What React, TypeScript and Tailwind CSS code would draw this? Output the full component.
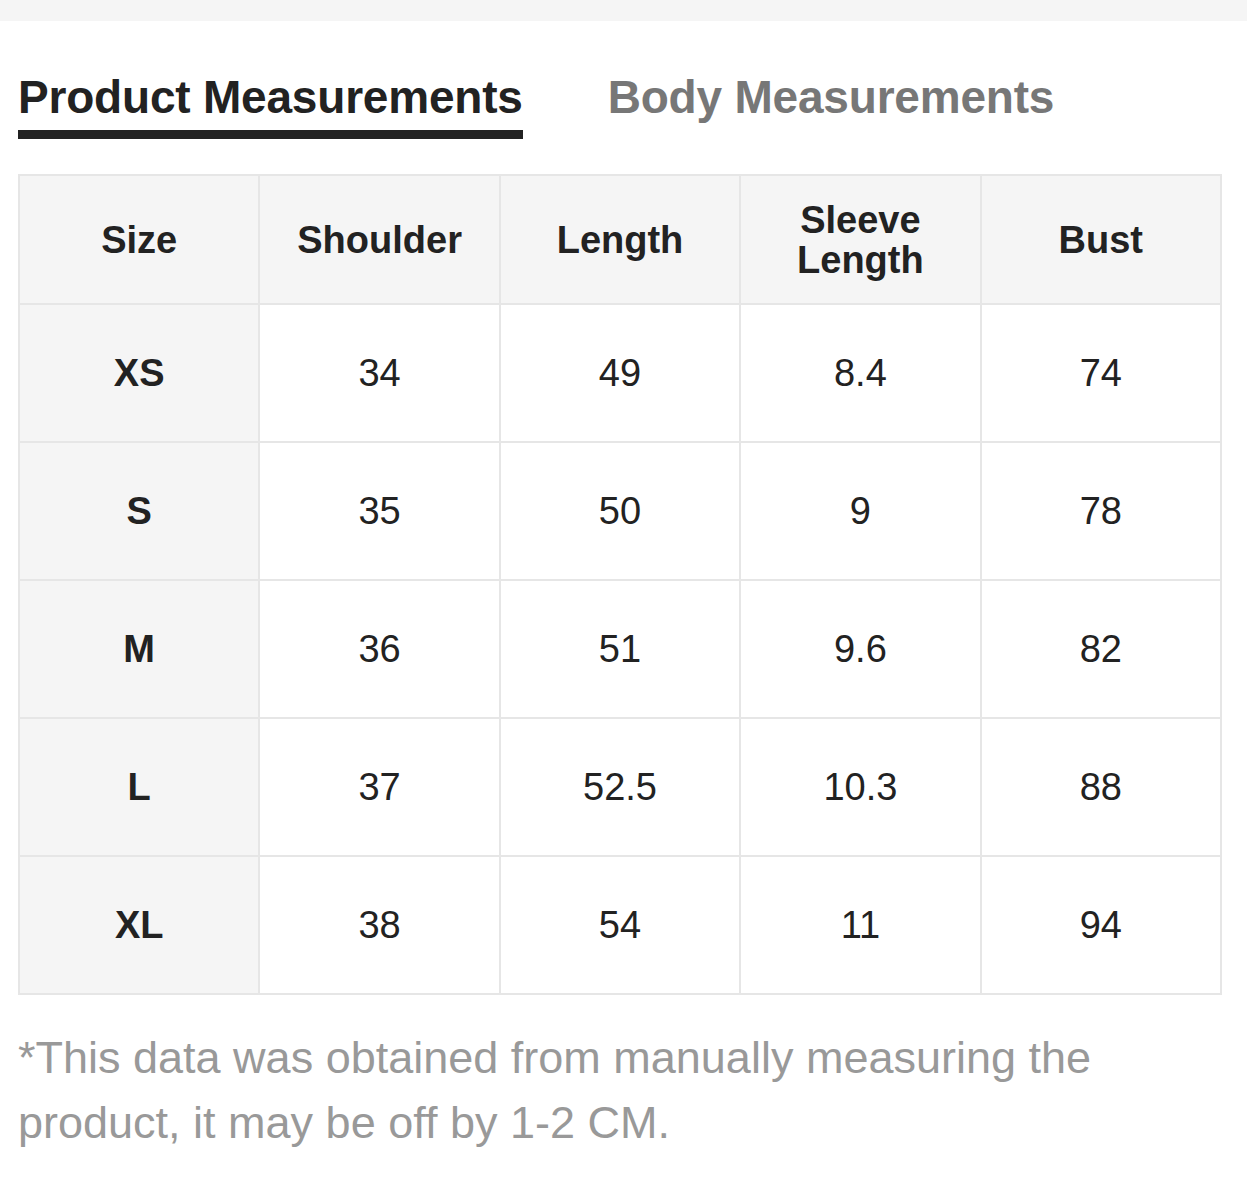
import * as React from "react";

const headers = ["Size", "Shoulder", "Length", "Sleeve Length", "Bust"];

const rows = [
  ["XS", "34", "49", "8.4", "74"],
  ["S", "35", "50", "9", "78"],
  ["M", "36", "51", "9.6", "82"],
  ["L", "37", "52.5", "10.3", "88"],
  ["XL", "38", "54", "11", "94"],
];

export default function App() {
  const [tab, setTab] = React.useState("product");

  return (
    <div
      className="min-h-screen bg-white text-[#222]"
      style={{ fontFamily: '"Liberation Sans", Arial, sans-serif' }}
    >
      {/* top strip */}
      <div className="h-[21px] bg-[#f5f5f5]" />

      <div className="px-[18px] pt-[53px]">
        {/* tabs */}
        <div className="flex items-start gap-[85px]">
          <button onClick={() => setTab("product")} className="flex flex-col items-stretch">
            <span
              className={`text-[46px] font-bold leading-none tracking-[-0.2px] ${
                tab === "product" ? "text-[#222]" : "text-[#777]"
              }`}
            >
              Product Measurements
            </span>
            <span
              className={`mt-[10px] h-[9px] ${tab === "product" ? "bg-[#222]" : "bg-transparent"}`}
            />
          </button>
          <button onClick={() => setTab("body")} className="flex flex-col items-stretch">
            <span
              className={`text-[46px] font-bold leading-none tracking-[-0.2px] ${
                tab === "body" ? "text-[#222]" : "text-[#777]"
              }`}
            >
              Body Measurements
            </span>
            <span
              className={`mt-[10px] h-[9px] ${tab === "body" ? "bg-[#222]" : "bg-transparent"}`}
            />
          </button>
        </div>

        {/* size table */}
        <div className="mt-[35px] grid w-[1204px] grid-cols-5 border-l-2 border-t-2 border-[#e6e6e6]">
          {headers.map((h) => (
            <div
              key={h}
              className="flex h-[129px] items-center justify-center border-b-2 border-r-2 border-[#e6e6e6] bg-[#f5f5f5] px-6 text-center text-[38px] font-bold leading-[40px]"
            >
              {h}
            </div>
          ))}
          {rows.map((row) =>
            row.map((cell, i) => (
              <div
                key={row[0] + i}
                className={`flex h-[138px] items-center justify-center border-b-2 border-r-2 border-[#e6e6e6] text-[38px] leading-none ${
                  i === 0 ? "bg-[#f5f5f5] font-bold" : "bg-white"
                }`}
              >
                {cell}
              </div>
            ))
          )}
        </div>

        {/* note */}
        <p className="mt-[30px] w-[1140px] text-[45px] leading-[65px] text-[#999]">
          *This data was obtained from manually measuring the product, it may be off by 1-2 CM.
        </p>
      </div>
    </div>
  );
}
